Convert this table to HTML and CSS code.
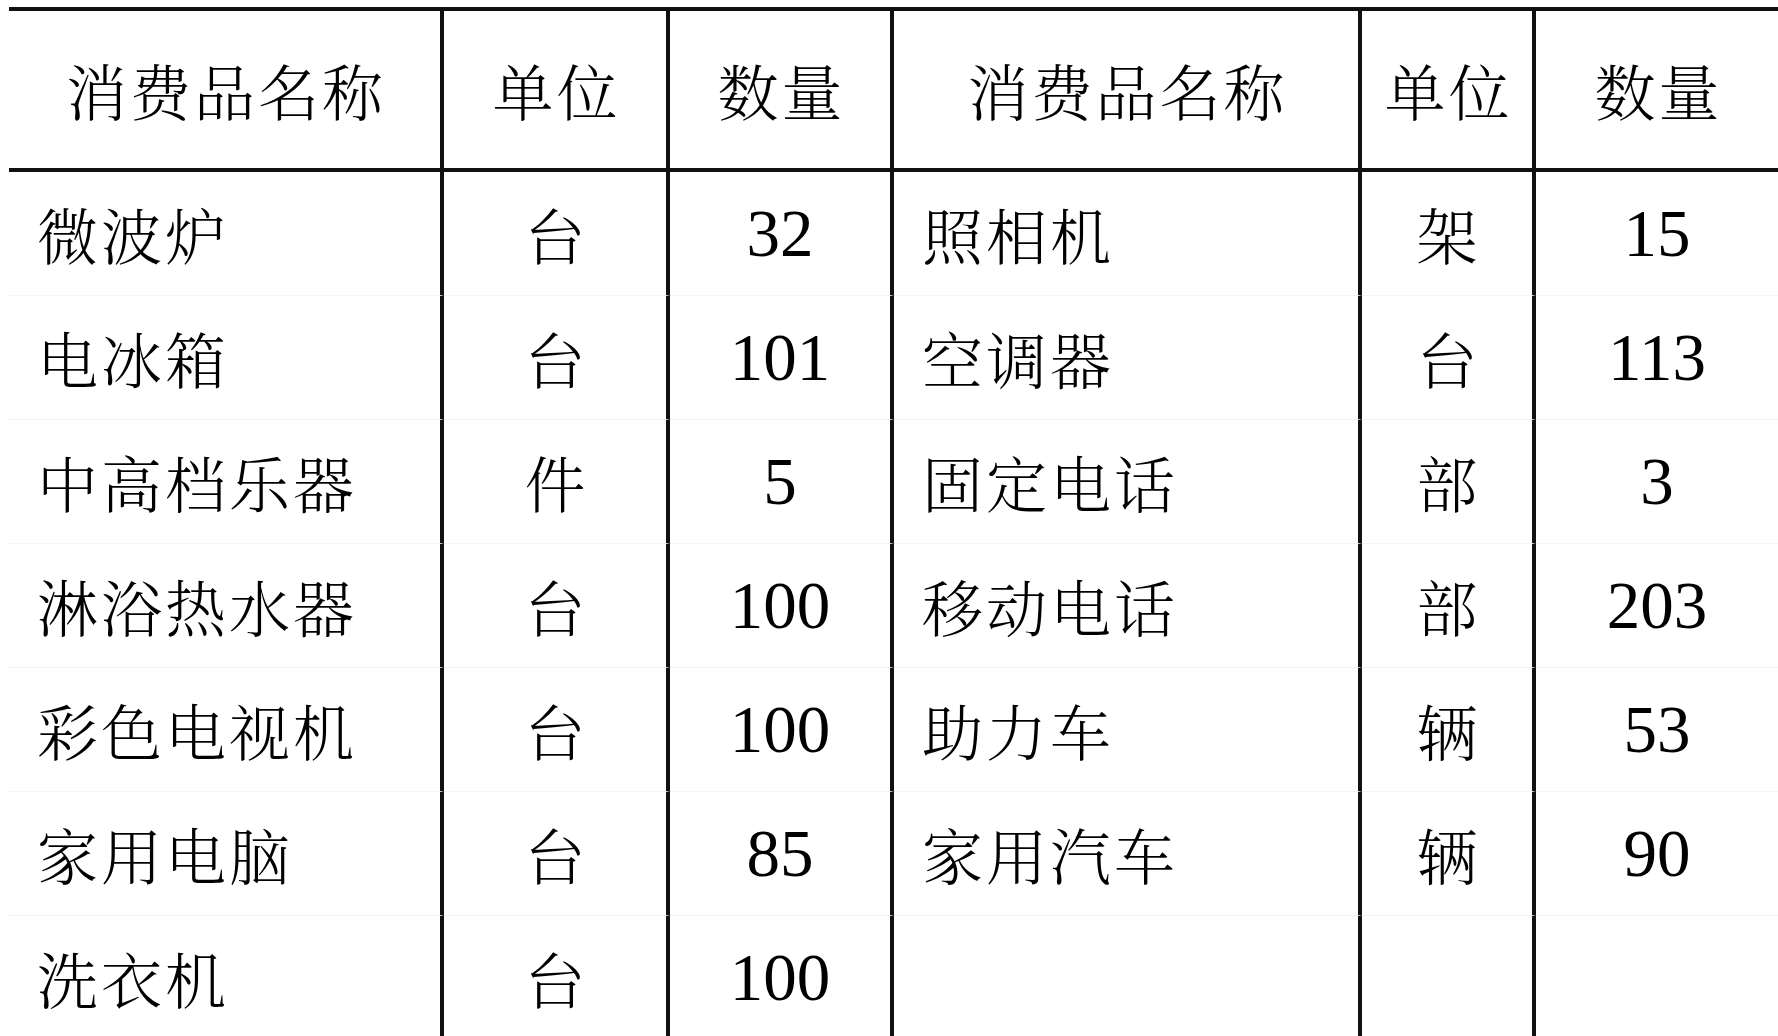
FILE: index.html
```html
<!DOCTYPE html>
<html lang="zh-CN">
<head>
<meta charset="utf-8">
<title>消费品数量</title>
<link rel="stylesheet" href="styles.css">
</head>
<body>
<table class="goods">
  <colgroup>
    <col class="c-name1"><col class="c-unit1"><col class="c-qty1">
    <col class="c-name2"><col class="c-unit2"><col class="c-qty2">
  </colgroup>
  <thead>
    <tr>
      <th class="cell-sep">消费品名称</th>
      <th class="cell-sep">单位</th>
      <th class="cell-sep">数量</th>
      <th class="cell-sep">消费品名称</th>
      <th class="cell-sep">单位</th>
      <th>数量</th>
    </tr>
  </thead>
  <tbody>
    <tr>
      <td class="name cell-sep">微波炉</td><td class="unit cell-sep">台</td><td class="num cell-sep">32</td>
      <td class="name cell-sep">照相机</td><td class="unit cell-sep">架</td><td class="num">15</td>
    </tr>
    <tr>
      <td class="name cell-sep">电冰箱</td><td class="unit cell-sep">台</td><td class="num cell-sep">101</td>
      <td class="name cell-sep">空调器</td><td class="unit cell-sep">台</td><td class="num">113</td>
    </tr>
    <tr>
      <td class="name cell-sep">中高档乐器</td><td class="unit cell-sep">件</td><td class="num cell-sep">5</td>
      <td class="name cell-sep">固定电话</td><td class="unit cell-sep">部</td><td class="num">3</td>
    </tr>
    <tr>
      <td class="name cell-sep">淋浴热水器</td><td class="unit cell-sep">台</td><td class="num cell-sep">100</td>
      <td class="name cell-sep">移动电话</td><td class="unit cell-sep">部</td><td class="num">203</td>
    </tr>
    <tr>
      <td class="name cell-sep">彩色电视机</td><td class="unit cell-sep">台</td><td class="num cell-sep">100</td>
      <td class="name cell-sep">助力车</td><td class="unit cell-sep">辆</td><td class="num">53</td>
    </tr>
    <tr>
      <td class="name cell-sep">家用电脑</td><td class="unit cell-sep">台</td><td class="num cell-sep">85</td>
      <td class="name cell-sep">家用汽车</td><td class="unit cell-sep">辆</td><td class="num">90</td>
    </tr>
    <tr>
      <td class="name cell-sep">洗衣机</td><td class="unit cell-sep">台</td><td class="num cell-sep">100</td>
      <td class="name cell-sep"></td><td class="unit cell-sep"></td><td class="num"></td>
    </tr>
  </tbody>
</table>
</body>
</html>
```

FILE: styles.css
```css
html, body {
  background: #ffffff;
}

body {
  margin: 7px 0 0 9px;
  overflow: hidden;
  color: #000;
  font-family: "Liberation Serif", "Noto Serif CJK SC", "Noto Sans CJK SC", serif;
}

.goods {
  border-collapse: separate;
  border-spacing: 0;
  table-layout: fixed;
  width: 1769px;
  border-top: 4px solid #111;
}

.c-name1 { width: 435px; }
.c-unit1 { width: 226px; }
.c-qty1  { width: 224px; }
.c-name2 { width: 468px; }
.c-unit2 { width: 174px; }
.c-qty2  { width: 242px; }

.goods th,
.goods td {
  padding: 0;
  vertical-align: middle;
  white-space: nowrap;
}

.goods th {
  height: 157px;
  border-bottom: 4px solid #111;
  font-weight: 300;
  font-size: 61px;
  letter-spacing: 3px;
  text-indent: 3px;
  text-align: center;
}

.goods td {
  height: 123px;
  border-bottom: 1px solid #f5f5f5;
}

.cell-sep {
  border-right: 4px solid #111;
}

.name {
  text-align: left;
  padding-left: 28px !important;
  font-size: 61px;
  font-weight: 300;
  letter-spacing: 3px;
}

.unit {
  text-align: center;
  font-size: 61px;
  font-weight: 300;
}

.num {
  text-align: center;
  font-size: 67px;
}
```
